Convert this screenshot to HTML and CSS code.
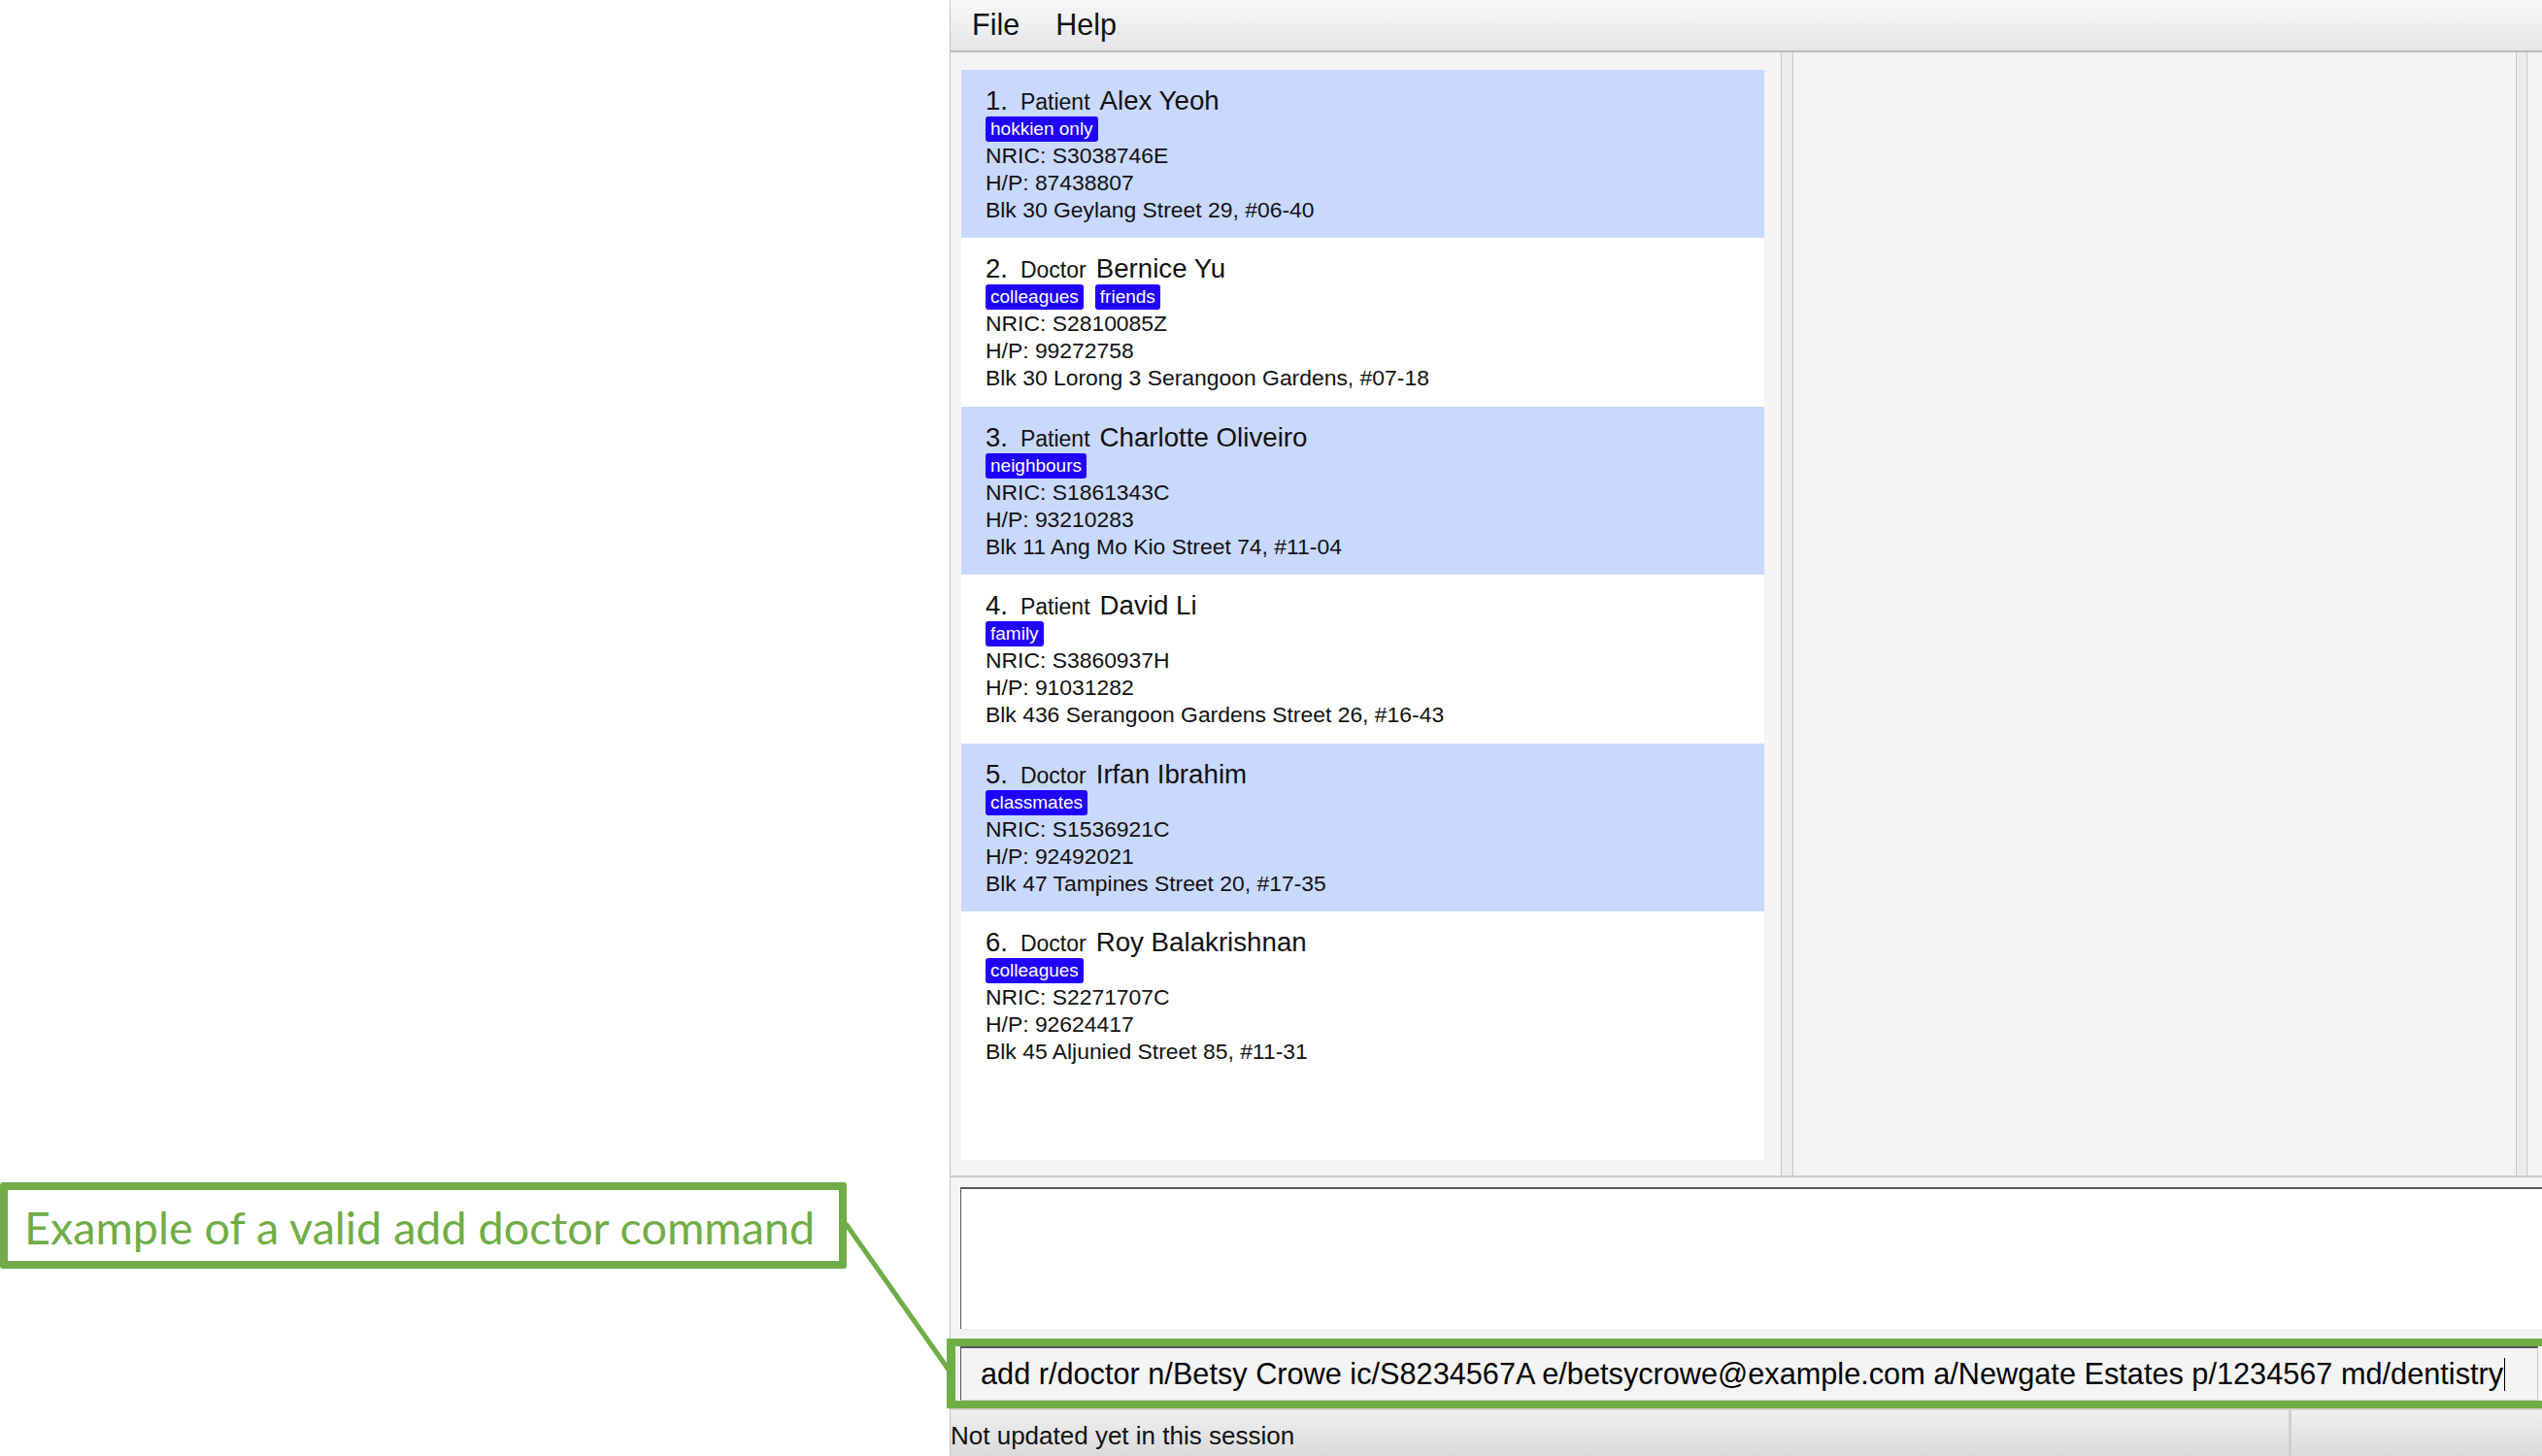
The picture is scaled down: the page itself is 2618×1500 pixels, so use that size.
FILE: index.html
```html
<!DOCTYPE html>
<html lang="en">
<head>
  <meta charset="UTF-8" />
  <title>Add doctor command</title>
  <meta name="viewport" content="width=device-width, initial-scale=1.0" />
  <link rel="stylesheet" href="styles.css">
</head>
<body>

  <div class="screen">

    <div class="gutter">
      <div class="callout">Example of a valid add doctor command</div>
    </div>

    <div class="app">
      <div class="menubar">
        <span class="menu-item">File</span>
        <span class="menu-item">Help</span>
      </div>

      <div class="split">
        <div class="list-pane">
          <div class="person-list">

            <div class="card card-blue">
              <div class="card-title">
                <span class="card-id">1.</span>
                <span class="card-role">Patient</span>
                <span class="card-name">Alex Yeoh</span>
              </div>
              <div class="tags"><span class="tag">hokkien only</span></div>
              <div class="card-line">NRIC: S3038746E</div>
              <div class="card-line">H/P: 87438807</div>
              <div class="card-line">Blk 30 Geylang Street 29, #06-40</div>
            </div>

            <div class="card">
              <div class="card-title">
                <span class="card-id">2.</span>
                <span class="card-role">Doctor</span>
                <span class="card-name">Bernice Yu</span>
              </div>
              <div class="tags"><span class="tag">colleagues</span><span class="tag">friends</span></div>
              <div class="card-line">NRIC: S2810085Z</div>
              <div class="card-line">H/P: 99272758</div>
              <div class="card-line">Blk 30 Lorong 3 Serangoon Gardens, #07-18</div>
            </div>

            <div class="card card-blue">
              <div class="card-title">
                <span class="card-id">3.</span>
                <span class="card-role">Patient</span>
                <span class="card-name">Charlotte Oliveiro</span>
              </div>
              <div class="tags"><span class="tag">neighbours</span></div>
              <div class="card-line">NRIC: S1861343C</div>
              <div class="card-line">H/P: 93210283</div>
              <div class="card-line">Blk 11 Ang Mo Kio Street 74, #11-04</div>
            </div>

            <div class="card">
              <div class="card-title">
                <span class="card-id">4.</span>
                <span class="card-role">Patient</span>
                <span class="card-name">David Li</span>
              </div>
              <div class="tags"><span class="tag">family</span></div>
              <div class="card-line">NRIC: S3860937H</div>
              <div class="card-line">H/P: 91031282</div>
              <div class="card-line">Blk 436 Serangoon Gardens Street 26, #16-43</div>
            </div>

            <div class="card card-blue">
              <div class="card-title">
                <span class="card-id">5.</span>
                <span class="card-role">Doctor</span>
                <span class="card-name">Irfan Ibrahim</span>
              </div>
              <div class="tags"><span class="tag">classmates</span></div>
              <div class="card-line">NRIC: S1536921C</div>
              <div class="card-line">H/P: 92492021</div>
              <div class="card-line">Blk 47 Tampines Street 20, #17-35</div>
            </div>

            <div class="card">
              <div class="card-title">
                <span class="card-id">6.</span>
                <span class="card-role">Doctor</span>
                <span class="card-name">Roy Balakrishnan</span>
              </div>
              <div class="tags"><span class="tag">colleagues</span></div>
              <div class="card-line">NRIC: S2271707C</div>
              <div class="card-line">H/P: 92624417</div>
              <div class="card-line">Blk 45 Aljunied Street 85, #11-31</div>
            </div>

          </div>
        </div>
        <div class="divider"></div>
        <div class="browser-pane"></div>
        <div class="divider"></div>
        <div class="extra-pane"></div>
      </div>

      <div class="result-pane">
        <div class="result-box"></div>
      </div>

      <div class="command-pane">
        <div class="command-box">
          <span class="command-text">add r/doctor n/Betsy Crowe ic/S8234567A e/betsycrowe@example.com a/Newgate Estates p/1234567 md/dentistry</span><span class="caret"></span>
        </div>
      </div>

      <div class="statusbar">
        <div class="status-left">Not updated yet in this session</div>
        <div class="status-right"></div>
      </div>
    </div>

    <!-- annotation over the screenshot -->
    <div class="highlight"></div>
    <svg class="connector" width="120" height="160" viewBox="0 0 120 160">
      <line x1="4" y1="4" x2="111" y2="156" stroke="#70ad47" stroke-width="5" stroke-linecap="round" />
    </svg>

  </div>

</body>
</html>
```

FILE: styles.css
```css
* {
  box-sizing: border-box;
}

body {
  margin: 0;
  background: #ffffff;
  font-family: 'Liberation Sans', Arial, sans-serif;
  color: #111;
}

.screen {
  position: relative;
  display: flex;
  width: 2618px;
  height: 1500px;
  overflow: hidden;
}

/* white margin on the left with the callout */
.gutter {
  width: 978px;
  flex-shrink: 0;
  padding-top: 1218px;
}

.callout {
  width: 872px;
  height: 89px;
  border: 8px solid #70ad47;
  border-radius: 3px;
  background: #fff;
  display: flex;
  align-items: center;
  padding-left: 17px;
  padding-top: 2px;
  font-family: Lato, 'Open Sans', sans-serif;
  font-size: 46.7px;
  color: #70ad47;
  white-space: nowrap;
}

.app {
  flex: 1;
  display: flex;
  flex-direction: column;
  border-left: 1px solid #c4c4c4;
  background: #f4f4f4;
  min-width: 0;
}

.menubar {
  height: 54px;
  flex-shrink: 0;
  display: flex;
  align-items: center;
  gap: 37px;
  padding-left: 22px;
  padding-bottom: 2px;
  background: linear-gradient(#f9f9f9, #e5e5e5);
  border-bottom: 2px solid #bcbcbc;
}

.menu-item {
  font-size: 30.5px;
  color: #111;
}

.split {
  height: 1159px;
  flex-shrink: 0;
  display: flex;
  border-bottom: 2px solid #cacaca;
}

.list-pane {
  width: 855px;
  flex-shrink: 0;
  padding: 18px 17px 16px 11px;
}

.person-list {
  height: 100%;
  background: #ffffff;
}

.card {
  padding: 16px 25px 15.4px;
  background: #ffffff;
}

.card-blue {
  background: #c9d8fd;
}

.card-title {
  display: flex;
  align-items: baseline;
  height: 32px;
  line-height: 32px;
  white-space: nowrap;
}

.card-id {
  font-size: 27.5px;
  margin-right: 13px;
}

.card-role {
  font-size: 23px;
  margin-right: 10px;
}

.card-name {
  font-size: 27.7px;
}

.tags {
  display: flex;
  gap: 12px;
  height: 26px;
}

.tag {
  background: #2000ff;
  color: #fff;
  font-size: 19px;
  line-height: 26px;
  padding: 0 5px;
  border-radius: 3px;
}

.card-line {
  font-size: 22.9px;
  line-height: 28px;
  white-space: nowrap;
}

.divider {
  width: 13px;
  flex-shrink: 0;
  background: #ececec;
  border-left: 1px solid #c6c6c6;
  border-right: 1px solid #c6c6c6;
}

.browser-pane {
  width: 744px;
  flex-shrink: 0;
}

.divider + .browser-pane + .divider {
  width: 12px;
}

.extra-pane {
  flex: 1;
}

.result-pane {
  height: 166px;
  flex-shrink: 0;
  padding: 10px 0 10px 10px;
}

.result-box {
  height: 100%;
  background: #ffffff;
  border-top: 2px solid #5a5a5a;
  border-left: 1px solid #5a5a5a;
}

.command-pane {
  height: 72px;
  flex-shrink: 0;
  padding: 8px 4px 8px 10px;
}

.command-box {
  height: 100%;
  display: flex;
  align-items: center;
  padding-left: 20px;
  background: #f4f4f4;
  border-top: 2px solid #555;
  border-left: 1px solid #555;
  border-right: 1px solid #c8c8c8;
  border-bottom: 1px solid #d0d0d0;
  white-space: nowrap;
}

.command-text {
  font-size: 30.7px;
  color: #000;
}

.caret {
  display: inline-block;
  width: 1px;
  height: 34px;
  margin-left: 1px;
  background: #000;
}

.statusbar {
  flex: 1;
  display: flex;
  border-top: 2px solid #d6d6d6;
  background: linear-gradient(#efefef, #d9d9d9);
}

.status-left {
  width: 1378px;
  font-size: 26px;
  line-height: 47px;
  padding-top: 3px;
  color: #111;
  white-space: nowrap;
}

.status-right {
  flex: 1;
  border-left: 3px solid #cfcfcf;
}

/* green highlight drawn over the command box */
.highlight {
  position: absolute;
  left: 975px;
  top: 1379px;
  width: 1660px;
  height: 72px;
  border: 8px solid #70ad47;
  border-left-width: 9px;
}

.connector {
  position: absolute;
  left: 868px;
  top: 1258px;
}
```
